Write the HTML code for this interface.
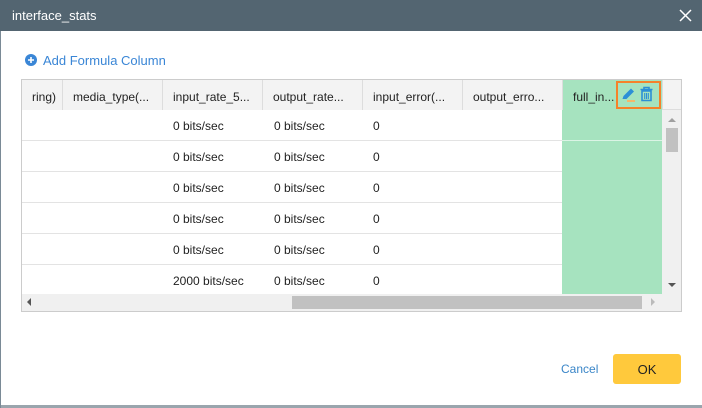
<!DOCTYPE html>
<html><head><style>
*{box-sizing:border-box;margin:0;padding:0}
body{width:702px;height:408px;background:#fff;font-family:"Liberation Sans",sans-serif;font-size:12px;color:#222;position:relative;overflow:hidden}
.a{position:absolute}
.hd{left:0;top:0;width:702px;height:31px;background:#536571;color:#fff;font-size:13px;padding:8px 0 0 12px}
.th{top:80px;height:30px;background:#f3f3f3;border-right:1px solid #ddd;padding:10px 0 0 10px;white-space:nowrap;overflow:hidden}
.td{height:31px;border-bottom:1px solid #e3e3e3;padding:9px 0 0 10px;white-space:nowrap;position:relative}
.td span{top:9px}
</style></head><body>
<div class="a" style="left:0;top:0;width:1px;height:408px;background:#7a8a96"></div>
<div class="a hd">interface_stats</div>
<svg class="a" style="left:679px;top:9px" width="13" height="13"><path d="M1 1L12 12M12 1L1 12" stroke="#fff" stroke-width="1.5"/></svg>
<svg class="a" style="left:25px;top:54px" width="12" height="12"><circle cx="6" cy="6" r="6" fill="#3a86d6"/><path d="M6 3v6M3 6h6" stroke="#fff" stroke-width="1.6"/></svg>
<div class="a" style="left:43px;top:53px;color:#3a86d6;font-size:13px">Add Formula Column</div>
<div class="a" style="left:21px;top:79px;width:661px;height:233px;border:1px solid #ccc;background:#fff"></div>
<div class="a" style="left:22px;top:80px;width:659px;height:30px;background:#f3f3f3;border-bottom:1px solid #ddd"></div>
<div class="a th" style="left:22px;width:41px">ring)</div>
<div class="a th" style="left:63px;width:100px">media_type(...</div>
<div class="a th" style="left:163px;width:100px">input_rate_5...</div>
<div class="a th" style="left:263px;width:100px">output_rate...</div>
<div class="a th" style="left:363px;width:100px">input_error(...</div>
<div class="a th" style="left:463px;width:100px">output_erro...</div>
<div class="a th" style="left:563px;width:100px;background:#a6e3bf">full_in...</div>
<div class="a" style="left:562px;top:110px;width:100px;height:184px;background:#a6e3bf"></div>
<div class="a" style="left:616px;top:81px;width:45px;height:28px;border:2px solid #f5822a"></div>
<svg class="a" style="left:621px;top:87px" width="15" height="15"><path d="M1.5 12L2.5 9L10 1.5L13 4.5L5.5 12Z" fill="#2c8fd6"/><path d="M6 14h8" stroke="#f5b76a" stroke-width="2"/></svg>
<svg class="a" style="left:639px;top:86px" width="15" height="16"><path d="M1.5 3.5h12M5 3.5V1.5h5V3.5M3 5h9v9.5H3z" fill="none" stroke="#2c8fd6" stroke-width="1.6"/><path d="M5.7 7v6M7.5 7v6M9.3 7v6" stroke="#2c8fd6" stroke-width="1.1"/></svg>
<div class="a" style="left:22px;top:110px;width:540px">
<div class="td"><span class="a" style="left:151px">0 bits/sec</span><span class="a" style="left:252px">0 bits/sec</span><span class="a" style="left:351px">0</span></div>
<div class="td"><span class="a" style="left:151px">0 bits/sec</span><span class="a" style="left:252px">0 bits/sec</span><span class="a" style="left:351px">0</span></div>
<div class="td"><span class="a" style="left:151px">0 bits/sec</span><span class="a" style="left:252px">0 bits/sec</span><span class="a" style="left:351px">0</span></div>
<div class="td"><span class="a" style="left:151px">0 bits/sec</span><span class="a" style="left:252px">0 bits/sec</span><span class="a" style="left:351px">0</span></div>
<div class="td"><span class="a" style="left:151px">0 bits/sec</span><span class="a" style="left:252px">0 bits/sec</span><span class="a" style="left:351px">0</span></div>
<div class="td" style="border:0"><span class="a" style="left:151px">2000 bits/sec</span><span class="a" style="left:252px">0 bits/sec</span><span class="a" style="left:351px">0</span></div>
</div>
<div class="a" style="left:562px;top:140px;width:100px;height:1px;background:#fff;opacity:.6"></div>
<div class="a" style="left:662px;top:110px;width:19px;height:201px;background:#f0f0f0"></div>
<div class="a" style="left:666px;top:128px;width:12px;height:24px;background:#c1c1c1"></div>
<div class="a" style="left:668px;top:118px;border:4px solid transparent;border-bottom:4px solid #a0a0a0;border-top:0"></div>
<div class="a" style="left:668px;top:283px;border:4px solid transparent;border-top:4px solid #555;border-bottom:0"></div>
<div class="a" style="left:22px;top:294px;width:640px;height:17px;background:#f0f0f0"></div>
<div class="a" style="left:292px;top:296px;width:350px;height:13px;background:#c1c1c1"></div>
<div class="a" style="left:27px;top:298px;border:4px solid transparent;border-right:4px solid #555;border-left:0"></div>
<div class="a" style="left:651px;top:298px;border:4px solid transparent;border-left:4px solid #bbb;border-right:0"></div>
<div class="a" style="left:561px;top:362px;color:#3a86c8;font-size:12px">Cancel</div>
<div class="a" style="left:613px;top:354px;width:68px;height:30px;background:#ffc93c;border-radius:3px;text-align:center;padding-top:8px;font-size:13px">OK</div>
<div class="a" style="left:1px;top:405px;width:701px;height:3px;background:#9aa5ad"></div>
</body></html>
